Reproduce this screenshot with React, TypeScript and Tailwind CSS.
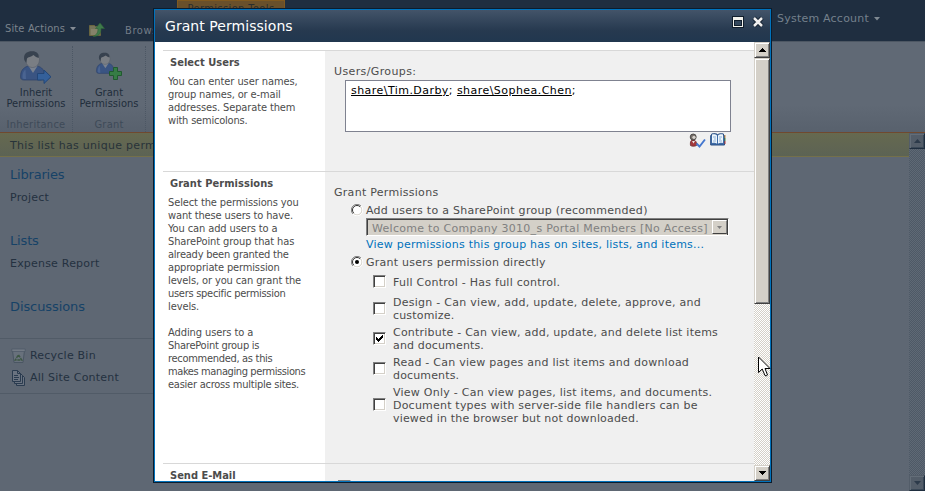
import React from "react";

const verdana = "font-['DejaVu_Sans',sans-serif]";
const tahoma = "font-['DejaVu_Sans_Condensed','DejaVu_Sans',sans-serif] [font-stretch:condensed]";

type LineProps = { children: React.ReactNode; className?: string };

function Line({ children, className = "" }: LineProps) {
  return <div className={`h-[13px] whitespace-nowrap leading-[13px] ${className}`}>{children}</div>;
}

function FolderUpIcon() {
  return (
    <svg width="18" height="16" viewBox="0 0 18 16" className="shrink-0">
      <path d="M1.500 3.500h5l1 1h5v9h-11z" fill="#76745a" stroke="#69653f" />
      <path d="M3 13V7h8l-1 6z" fill="#85826a" />
      <path d="M5 14.500c5 0 8-2 8-8h3.500L12 1 7.500 6.500H10c0 4-1 6-5 8z" fill="#3f7a4b" stroke="#2d6238" strokeWidth=".6" />
    </svg>
  );
}

function Person() {
  return (
    <g>
      <path d="M.6 26c0-6 2-9 7.400-11h9c5 1 7.400 4 7.400 9 0 3-1 4-3.400 5H4c-2 0-3.400-1-3.400-3z" fill="#3a5482" stroke="#2b4068" strokeWidth=".7" />
      <path d="M2.500 26c0-4 1-6 3-7.500L6 28H4c-1 0-1.500-1-1.500-2z" fill="#4a6491" />
      <path d="M8.500 15l4.500 7 4.500-7-4.500-2z" fill="#7a828f" />
      <path d="M5.500 8c0-5 3-7 7-7s7 2 7 7c0 5-3 8.500-7 8.500S5.500 13 5.500 8z" fill="#7a7e84" stroke="#555d68" strokeWidth=".6" />
      <path d="M4.300 9C3 3 7 .3 11.500.3c5-.5 8 2.700 7.200 6.700C17 6.500 15 5.500 13.500 4 11 6 8 6 7 7.500L6.300 12z" fill="#38424f" />
    </g>
  );
}

function InheritIcon() {
  return (
    <svg width="32" height="33" viewBox="0 0 32 33" className="shrink-0">
      <Person />
      <path d="M17.500 22.500h6.500V19l7 6.800-7 6.700V29h-6.500z" fill="#34609a" stroke="#234677" />
    </svg>
  );
}

function GrantIcon() {
  return (
    <svg width="32" height="33" viewBox="0 0 32 33" className="shrink-0">
      <g transform="translate(3 1.500) scale(.72)"><Person /></g>
      <path d="M20.500 16.500h4v4h4v4h-4v4h-4v-4h-4v-4h4z" fill="#367c45" stroke="#205a2f" />
    </svg>
  );
}

function RecycleIcon() {
  return (
    <svg width="16" height="16" viewBox="0 0 16 16" className="shrink-0">
      <path d="M1.500 2.500h12l-1.500 12H3z" fill="#68717c" stroke="#4a5663" />
      <path d="M.8 1h13.400v2.500H.8z" fill="#727a84" stroke="#4c5865" strokeWidth=".7" />
      <path d="M7.500 6.800L10.800 12H4.200z" fill="none" stroke="#3c5643" strokeWidth="1.400" strokeDasharray="3 .8" />
    </svg>
  );
}

function PagesIcon() {
  return (
    <svg width="16" height="16" viewBox="0 0 16 16" fill="#6a7380" stroke="#2a3b4f" className="shrink-0">
      <path d="M5.500 4.500h5l3 3v8h-8z" />
      <path d="M3.500 2.500h5l3 3v8h-8z" />
      <path d="M1.500.5h5l3 3v8h-8z" />
      <path d="M6.500.5v3h3M3 5.500h4M3 7.500h5M3 9.500h4" fill="none" />
    </svg>
  );
}

function CheckNamesIcon() {
  return (
    <svg width="17" height="15" viewBox="0 0 17 15">
      <path d="M1.500 12.500c-.5-4 .5-5.500 2.500-5.500s4 1.500 3.500 5.500c-2 1-4.500 1-6 0z" fill="#a5383c" stroke="#6b2b2d" strokeWidth=".8" />
      <path d="M3 8l1.500 2.500L6 8z" fill="#e8e4e2" />
      <circle cx="4.200" cy="4" r="3" fill="#77706b" stroke="#3c3a39" strokeWidth=".8" />
      <circle cx="5" cy="4.300" r="1.600" fill="#d7d2cd" />
      <path d="M7.500 10.500l3 3 5.500-7" fill="none" stroke="#4477cf" strokeWidth="1.900" />
    </svg>
  );
}

function BookIcon() {
  return (
    <svg width="16" height="14" viewBox="0 0 16 14">
      <path d="M.7 2.500h1V1c3-.7 5-.3 6 .7C9 .7 11 .5 13.500 1v1.500h1V12H.700z" fill="#3f6ca8" stroke="#294e83" />
      <path d="M2 1.500c2-.5 4 0 5 1v8.300c-1-1-3-1.300-5-.8zM8 2.500c1-1 3-1.500 5-1V10c-2-.5-4-.2-5 .8z" fill="#eef6fc" />
      <path d="M3 4h3M4 6h2M3 8h3M9 4h3M9 6h2M9 8h3" stroke="#8fb2d8" />
      <path d="M15 2v3" stroke="#cc8e43" /><path d="M15 5v3" stroke="#4b8c4d" /><path d="M15 8v3" stroke="#b43b3b" />
    </svg>
  );
}

function ScrollButton({ up = false }: { up?: boolean }) {
  return (
    <div className="flex h-4 w-4 shrink-0 items-center justify-center border border-t-[#d4d0c8] border-l-[#d4d0c8] border-r-[#404040] border-b-[#404040] bg-[#d4d0c8] shadow-[inset_1px_1px_#fff,inset_-1px_-1px_#808080]">
      <svg width="7" height="4" viewBox="0 0 7 4" shapeRendering="crispEdges">
        <path d={up ? "M3 0h1v1h1v1h1v1h1v1H0V3h1V2h1V1h1z" : "M0 0h7v1H6v1H5v1H4v1H3V3H2V2H1V1H0z"} fill="#000" />
      </svg>
    </div>
  );
}

function PageScrollButton({ up = false }: { up?: boolean }) {
  return (
    <div className="flex h-4 w-4 shrink-0 items-center justify-center border border-t-[#535d69] border-l-[#535d69] border-r-[#1f2e3f] border-b-[#1f2e3f] bg-[#535d69] shadow-[inset_1px_1px_#636d78,inset_-1px_-1px_#3a4857]">
      <svg width="7" height="4" viewBox="0 0 7 4">
        <path d={up ? "M3.500 0L7 4H0z" : "M0 0h7L3.500 4z"} fill="#2c3a4a" />
      </svg>
    </div>
  );
}

function Radio({ checked = false }: { checked?: boolean }) {
  return (
    <svg width="12" height="12" viewBox="0 0 12 12" className="shrink-0 -translate-y-px">
      <circle cx="6" cy="6" r="5" fill="#fff" />
      <path d="M2 10A5.500 5.500 0 0 1 10 2" fill="none" stroke="#808080" />
      <path d="M2.800 9.200A4.500 4.500 0 0 1 9.200 2.800" fill="none" stroke="#303030" />
      <path d="M2.500 9.500A4.900 4.900 0 0 0 9.500 2.500" fill="none" stroke="#d4d0c8" />
      <path d="M2 10.200A5.700 5.700 0 0 0 10.200 2" fill="none" stroke="#fff" />
      {checked && <circle cx="6" cy="6" r="2" fill="#000" />}
    </svg>
  );
}

function CheckBox({ checked = false }: { checked?: boolean }) {
  return (
    <div className="flex h-[13px] w-[13px] shrink-0 -translate-y-px items-center justify-center border border-t-[#808080] border-l-[#808080] border-r-white border-b-white bg-white shadow-[inset_1px_1px_#404040,inset_-1px_-1px_#d4d0c8]">
      {checked && (
        <svg width="7" height="7" viewBox="0 0 7 7" shapeRendering="crispEdges">
          <path d="M0 2h1v1h1v1h1V3h1V2h1V1h1V0h1v3H6v1H5v1H4v1H3v1H2V6H1V5H0z" fill="#000" />
        </svg>
      )}
    </div>
  );
}

function Option({ lines, checked, className = "" }: { lines: [string, string][]; checked?: boolean; className?: string }) {
  return (
    <div className={`flex items-center gap-[7px] ${className}`}>
      <CheckBox checked={checked} />
      <div>
        {lines.map(([text, tracking]) => (
          <Line key={text} className={tracking}>{text}</Line>
        ))}
      </div>
    </div>
  );
}

function Page() {
  return (
    <div className={`flex h-full w-full flex-col bg-[#5e6773] text-[11px] ${verdana}`}>
      <header className="flex h-[41px] shrink-0 justify-between bg-[#1f2e40]">
        <div className="flex">
          <div className={`flex h-full w-[88px] items-center gap-[5px] pt-[17px] pl-[5px] text-[#7b838c] ${tahoma}`}>
            <span className="whitespace-nowrap tracking-[0.15px]">Site Actions</span>
            <svg width="6" height="4" viewBox="0 0 6 4"><path d="M0 0h6L3 3.500z" fill="#858c95" /></svg>
          </div>
          <div className="pt-[22px]"><FolderUpIcon /></div>
          <div className={`w-[71px] pt-[24px] pl-[19px] leading-[14px] text-[#737c87] ${tahoma}`}>
            <span className="tracking-[0.6px]">Browse</span>
          </div>
          <div className="h-[20px] w-[108px] overflow-hidden border border-[#80591e] bg-[#69502b] text-center leading-[15px] text-[#2a2d2d]">
            <span className={`tracking-[0.4px] ${tahoma}`}>Permission Tools</span>
          </div>
        </div>
        <div className="flex h-[38px] w-[148px] items-center gap-[5px] text-[#74808c]">
          <span className="whitespace-nowrap tracking-[0.22px]">System Account</span>
          <svg width="6" height="4" viewBox="0 0 6 4"><path d="M0 0h6L3 3.500z" fill="#7f8992" /></svg>
        </div>
      </header>
      <div className={`flex h-[91px] shrink-0 border-t border-[#4d5763] bg-linear-to-b from-[#606975] from-70% to-[#58616d] text-[#212d3b] ${tahoma}`}>
        <div className="mt-1 flex w-[73px] flex-col items-center border-r border-dotted border-[#4c5764] pt-[5px]">
          <InheritIcon />
          <div className="mt-[3px] text-center leading-[11px] tracking-[0.05px]">Inherit<br />Permissions</div>
          <div className="mt-[9px] leading-[13px] tracking-[0.25px] text-[#3e4a58]">Inheritance</div>
        </div>
        <div className="mt-1 flex w-[73px] flex-col items-center border-r border-dotted border-[#4c5764] pt-[5px]">
          <GrantIcon />
          <div className="mt-[3px] text-center leading-[11px] tracking-[0.05px]">Grant<br />Permissions</div>
          <div className="mt-[9px] leading-[13px] tracking-[0.25px] text-[#3e4a58]">Grant</div>
        </div>
      </div>
      <div className="flex min-h-0 flex-1 border-t border-[#70492f]">
        <div className="flex-1">
          <div className="h-6 border-b border-[#74704a] bg-linear-to-b from-[#66694f] via-[#616652] to-[#5c6354] pl-[10px] leading-[25px] tracking-[0.3px] text-[#283339]">
            This list has unique permissions.
          </div>
          <nav className="flex w-[153px] flex-col pt-[9px] pl-[10px] tracking-[0.2px] text-[#243140]">
            <div className="text-[13px] leading-[18px] tracking-[-0.2px] text-[#164267]">Libraries</div>
            <div className="mt-[6px] h-[42px] leading-[15px]">Project</div>
            <div className="text-[13px] leading-[18px] tracking-[-0.15px] text-[#164267]">Lists</div>
            <div className="mt-[6px] h-[42px] leading-[15px]">Expense Report</div>
            <div className="text-[13px] leading-[18px] tracking-[-0.1px] text-[#164267]">Discussions</div>
          </nav>
          <div className="mt-[22px] flex h-[56px] w-[153px] flex-col gap-[6px] border-y border-[#515b67] pt-[9px] pl-[11px] tracking-[0.22px] text-[#243140]">
            <div className="flex h-4 items-center gap-[3px]"><RecycleIcon />Recycle Bin</div>
            <div className="flex h-4 items-center gap-[3px]"><PagesIcon />All Site Content</div>
          </div>
        </div>
        <div className="flex w-4 flex-col bg-[repeating-conic-gradient(#4e5966_0_25%,#5f6975_0_50%)] bg-[length:2px_2px]">
          <PageScrollButton up />
          <div className="flex-1" />
          <PageScrollButton />
        </div>
      </div>
    </div>
  );
}

function Dialog() {
  return (
    <div className={`absolute top-[8px] left-[153px] flex h-[475px] w-[619px] flex-col border border-[#0b1c2d] bg-white text-[11px] text-[#4c4c4c] ${verdana}`}>
      <div className="flex min-h-0 flex-1 flex-col border border-[#0072bc]">
        <header className="flex h-8 shrink-0 items-center bg-linear-to-b from-[#435469] via-[#26394f] via-65% to-[#21374f] pl-[10px] text-white">
          <h1 className="flex-1 pb-px text-[14px] leading-[18px] tracking-[0.05px]">Grant Permissions</h1>
          <svg width="12" height="12" viewBox="0 0 12 12" shapeRendering="crispEdges" className="mt-[-8px] mr-[8px]">
            <path d="M0 0h12v12H0z" fill="#111e2c" />
            <path d="M1 1h10v10H1z" fill="#f2f2ec" />
            <path d="M2 4h8v6H2z" fill="#111e2c" />
            <path d="M3 5h6v4H3z" fill="#33475c" />
          </svg>
          <svg width="12" height="12" viewBox="0 0 12 12" className="mt-[-8px] mr-[6px]">
            <path d="M2 2l8 8M10 2l-8 8" stroke="#111e2c" strokeWidth="4.500" />
            <path d="M2 2l8 8M10 2l-8 8" stroke="#efefef" strokeWidth="2.500" />
          </svg>
        </header>
        <div className="flex min-h-0 flex-1">
          <main className="flex w-[599px] flex-col overflow-hidden pt-2 pl-2">
            <section className="flex h-[121px] shrink-0 border-t border-[#d8d8d8]">
              <div className={`w-[162px] shrink-0 pt-[5px] pl-[5px] ${tahoma}`}>
                <Line className="pl-[2px] font-bold tracking-[0.03px]">Select Users</Line>
                <div className="mt-[6px]">
                  <Line className="tracking-[-0.08px]">You can enter user names,</Line>
                  <Line className="tracking-[-0.13px]">group names, or e-mail</Line>
                  <Line className="tracking-[-0.12px]">addresses. Separate them</Line>
                  <Line className="tracking-[-0.2px]">with semicolons.</Line>
                </div>
              </div>
              <div className="flex-1 bg-[#f0f0f0] pt-[14px] pl-[9px]">
                <Line className="tracking-[0.38px]">Users/Groups:</Line>
                <div className="mt-[2px] ml-[11px] h-[52px] w-[386px] border border-[#7f8290] bg-white pt-[3px] pl-[5px] text-black">
                  <Line className="tracking-[0.45px]"><span className="underline">share\Tim.Darby</span>; <span className="underline">share\Sophea.Chen</span>;</Line>
                </div>
                <div className="mt-[1px] ml-[355px] flex gap-[4px]"><CheckNamesIcon /><BookIcon /></div>
              </div>
            </section>
            <section className="flex h-[292px] shrink-0 border-t border-[#d8d8d8]">
              <div className={`w-[162px] shrink-0 pt-[5px] pl-[5px] ${tahoma}`}>
                <Line className="pl-[2px] font-bold tracking-[0.05px]">Grant Permissions</Line>
                <div className="mt-[6px]">
                  <Line className="tracking-[-0.11px]">Select the permissions you</Line>
                  <Line className="tracking-[-0.14px]">want these users to have.</Line>
                  <Line className="tracking-[-0.1px]">You can add users to a</Line>
                  <Line className="tracking-[-0.1px]">SharePoint group that has</Line>
                  <Line className="tracking-[-0.24px]">already been granted the</Line>
                  <Line className="tracking-[-0.15px]">appropriate permission</Line>
                  <Line className="tracking-[-0.12px]">levels, or you can grant the</Line>
                  <Line className="tracking-[-0.28px]">users specific permission</Line>
                  <Line className="tracking-[-0.1px]">levels.</Line>
                </div>
                <div className="mt-[13px]">
                  <Line className="tracking-[-0.08px]">Adding users to a</Line>
                  <Line className="tracking-[-0.25px]">SharePoint group is</Line>
                  <Line className="tracking-[-0.3px]">recommended, as this</Line>
                  <Line className="tracking-[-0.39px]">makes managing permissions</Line>
                  <Line className="tracking-[-0.24px]">easier across multiple sites.</Line>
                </div>
              </div>
              <div className="flex-1 bg-[#f0f0f0] pt-[14px] pl-[9px]">
                <Line className="tracking-[0.28px]">Grant Permissions</Line>
                <div className="mt-[4px] flex h-[15px] items-center gap-[3px] pl-[17px]">
                  <Radio />
                  <Line className="tracking-[0.28px]">Add users to a SharePoint group (recommended)</Line>
                </div>
                <div className="ml-[32px] flex h-[18px] w-[363px] items-center border border-t-[#808080] border-l-[#808080] border-r-white border-b-white bg-[#d4d0c8] pr-px pl-[5px] text-[#808080] shadow-[inset_1px_1px_#404040,inset_-1px_0_#404040]">
                  <Line className="flex-1 pt-px tracking-[0.28px]">Welcome to Company 3010_s Portal Members [No Access]</Line>
                  <div className="flex h-[14px] w-[15px] items-center justify-center border border-t-white border-l-white border-r-[#808080] border-b-[#404040] bg-[#d4d0c8]">
                    <svg width="5" height="3" viewBox="0 0 5 3"><path d="M0 0h5L2.500 3z" fill="#808080" /></svg>
                  </div>
                </div>
                <Line className="mt-[2px] ml-[32px] tracking-[0.22px] text-[#0072bc]">View permissions this group has on sites, lists, and items...</Line>
                <div className="mt-[4px] flex h-[15px] items-center gap-[3px] pl-[17px]">
                  <Radio checked />
                  <Line className="tracking-[0.24px]">Grant users permission directly</Line>
                </div>
                <div className="mt-[6px] flex flex-col gap-[4px] pl-[39px]">
                  <Option className="mb-[3px]" lines={[["Full Control - Has full control.", "tracking-[0.25px]"]]} />
                  <Option lines={[["Design - Can view, add, update, delete, approve, and", "tracking-[0.27px]"], ["customize.", "tracking-[0.17px]"]]} />
                  <Option checked lines={[["Contribute - Can view, add, update, and delete list items", "tracking-[0.22px]"], ["and documents.", "tracking-[0.15px]"]]} />
                  <Option lines={[["Read - Can view pages and list items and download", "tracking-[0.24px]"], ["documents.", "tracking-[0.15px]"]]} />
                  <Option lines={[["View Only - Can view pages, list items, and documents.", "tracking-[0.25px]"], ["Document types with server-side file handlers can be", "tracking-[0.21px]"], ["viewed in the browser but not downloaded.", "tracking-[0.17px]"]]} />
                </div>
              </div>
            </section>
            <section className="flex h-[120px] shrink-0 border-t border-[#d8d8d8]">
              <div className={`w-[162px] shrink-0 pt-[5px] pl-[7px] ${tahoma}`}>
                <Line className="font-bold">Send E-Mail</Line>
              </div>
              <div className="flex-1 bg-[#f0f0f0] pt-[17px] pl-[13px]"><CheckBox /></div>
            </section>
          </main>
          <div className="flex w-4 flex-col bg-[repeating-conic-gradient(#d4d0c8_0_25%,#fff_0_50%)] bg-[length:2px_2px]">
            <ScrollButton up />
            <div className="h-[246px] border border-t-[#d4d0c8] border-l-[#d4d0c8] border-r-[#404040] border-b-[#404040] bg-[#d4d0c8] shadow-[inset_1px_1px_#fff,inset_-1px_-1px_#808080]" />
            <div className="flex-1" />
            <ScrollButton />
          </div>
        </div>
      </div>
    </div>
  );
}

function Pointer() {
  return (
    <svg className="absolute top-[356px] left-[758px]" width="13" height="21" viewBox="0 0 13 21">
      <path d="M.5 1v15.500l3.700-3.500 2.800 6.500q1 1 2.500-.5L7 12.500h5z" fill="#fff" stroke="#000" />
    </svg>
  );
}

export default function App() {
  return (
    <div className="relative h-[491px] w-[925px] overflow-hidden">
      <Page />
      <Dialog />
      <Pointer />
    </div>
  );
}
